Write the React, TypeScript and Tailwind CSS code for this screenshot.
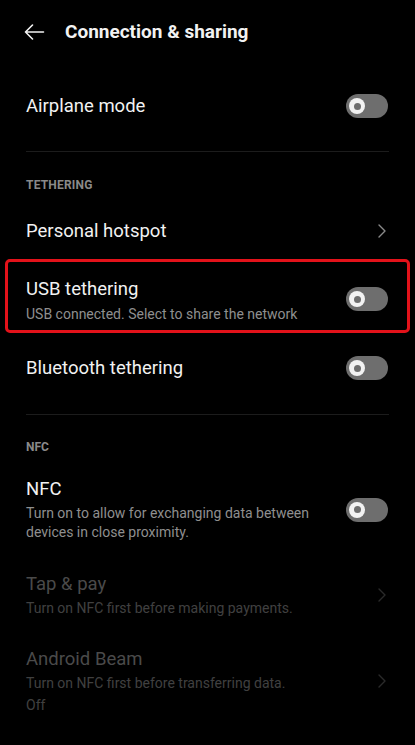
import React from "react";

function Toggle() {
  return (
    <div className="w-[42px] h-[24px] rounded-full bg-[#6e6e6e] flex items-center pl-[3px] shrink-0">
      <div className="w-[16px] h-[16px] rounded-full bg-[#f2f2f2] flex items-center justify-center">
        <div className="w-[7px] h-[7px] rounded-full bg-[#6e6e6e]" />
      </div>
    </div>
  );
}

function Chevron({ color }: { color: string }) {
  return (
    <svg width="12" height="16" viewBox="0 0 12 16" fill="none" className="shrink-0 mr-[1px]">
      <path d="M3 2 L9 8 L3 14" stroke={color} strokeWidth="1.4" strokeLinecap="round" strokeLinejoin="round" />
    </svg>
  );
}

export default function App() {
  const font = { fontFamily: "Roboto, 'Noto Sans', sans-serif" };
  return (
    <div className="w-[415px] h-[745px] bg-black text-[#f2f2f2] overflow-hidden" style={font}>
      {/* Header */}
      <div className="h-[64px] flex items-center pl-[24px]">
        <svg width="21" height="16" viewBox="0 0 21 16" fill="none">
          <path d="M1.5 8 H19.5 M8.5 1 L1.5 8 L8.5 15" stroke="#f2f2f2" strokeWidth="1.6" strokeLinecap="round" strokeLinejoin="round" />
        </svg>
        <div className="ml-[20px] text-[19px] font-bold leading-[24px]">Connection &amp; sharing</div>
      </div>

      {/* Airplane */}
      <div className="h-[84px] flex items-center justify-between pl-[26px] pr-[27px]">
        <div className="text-[18.5px] leading-[24px]">Airplane mode</div>
        <Toggle />
      </div>
      <div className="mt-[3px] mx-[26px] h-px bg-[#1c1c1c]" />

      {/* Tethering */}
      <div className="pt-[25px] pl-[26px] text-[12px] leading-[16px] font-bold text-[#8a8a8a] tracking-[0.2px]">TETHERING</div>
      <div className="mt-[10px] h-[56px] flex items-center justify-between pl-[26px] pr-[26px]">
        <div className="text-[18.5px] leading-[24px]">Personal hotspot</div>
        <Chevron color="#8a8a8a" />
      </div>

      <div className="mx-[5px] h-[74px] border-[3px] border-[#e3121a] rounded-[5px] flex items-start justify-between pl-[18px] pr-[19px]">
        <div className="flex flex-col pt-[15px]">
          <div className="text-[18.5px] leading-[24px]">USB tethering</div>
          <div className="text-[14px] leading-[19px] text-[#8f8f8f] mt-[4px]">USB connected. Select to share the network</div>
        </div>
        <div className="pt-[25px]">
          <Toggle />
        </div>
      </div>

      <div className="h-[70px] flex items-center justify-between pl-[26px] pr-[27px]">
        <div className="text-[18.5px] leading-[24px]">Bluetooth tethering</div>
        <Toggle />
      </div>
      <div className="mt-[11px] mx-[26px] h-px bg-[#1c1c1c]" />

      {/* NFC */}
      <div className="pt-[24px] pl-[26px] text-[12px] leading-[16px] font-bold text-[#8a8a8a]">NFC</div>
      <div className="mt-[22px] flex items-center justify-between pl-[26px] pr-[27px]">
        <div className="flex flex-col">
          <div className="text-[18.5px] leading-[24px]">NFC</div>
          <div className="text-[14px] leading-[19px] text-[#8f8f8f] mt-[3px] w-[300px]">
            Turn on to allow for exchanging data between devices in close proximity.
          </div>
        </div>
        <Toggle />
      </div>

      <div className="mt-[30px] flex items-center justify-between pl-[26px] pr-[26px]">
        <div className="flex flex-col">
          <div className="text-[18.5px] leading-[24px] text-[#4a4a4a]">Tap &amp; pay</div>
          <div className="text-[14px] leading-[19px] text-[#404040] mt-[3px]">Turn on NFC first before making payments.</div>
        </div>
        <Chevron color="#2a2a2a" />
      </div>

      <div className="mt-[29px] flex items-center justify-between pl-[26px] pr-[26px]">
        <div className="flex flex-col">
          <div className="text-[18.5px] leading-[24px] text-[#4a4a4a]">Android Beam</div>
          <div className="text-[14px] leading-[19px] text-[#404040] mt-[3px]">Turn on NFC first before transferring data.</div>
          <div className="text-[14px] leading-[19px] text-[#404040] mt-[3px]">Off</div>
        </div>
        <Chevron color="#2a2a2a" />
      </div>
    </div>
  );
}
